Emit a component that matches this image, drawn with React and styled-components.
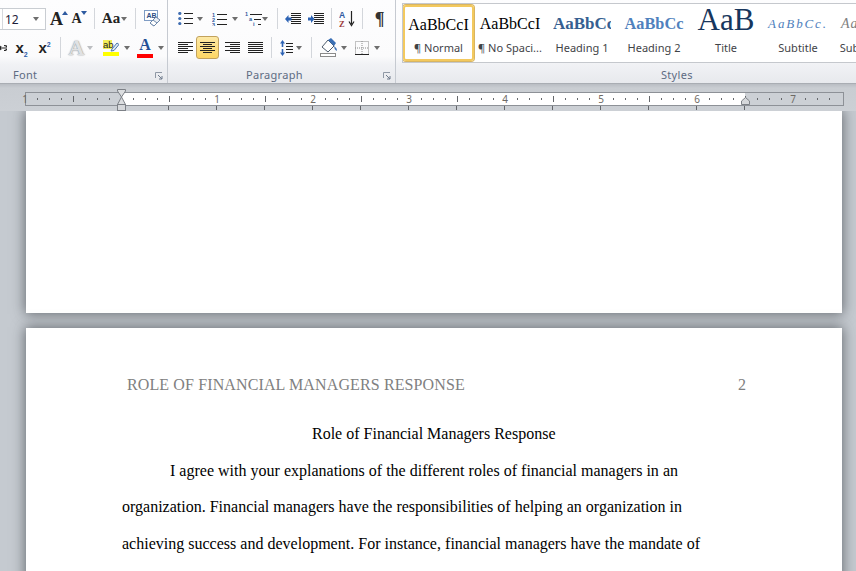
import React from "react";
import styled, { createGlobalStyle } from "styled-components";

const Global = createGlobalStyle`
  html, body { margin: 0; padding: 0; height: 100%; overflow: hidden; background: #c5cad0; }
  #root { height: 100%; }
  * { box-sizing: border-box; }
`;

const Shell = styled.div`
  width: 856px; height: 571px; overflow: hidden;
  display: flex; flex-direction: column;
  font-family: "Noto Sans", sans-serif;
`;

/* ---------- Ribbon ---------- */
const Ribbon = styled.div`
  height: 84px; flex: none; display: flex; position: relative; z-index: 2;
  background: linear-gradient(#fdfdfe 0, #fbfbfc 56px, #f1f2f5 64px, #e7e9ed 83px);
  border-bottom: 1px solid #a9adb3;
`;
const Group = styled.section`
  width: ${p => p.$w}px; flex: none; display: flex; flex-direction: column; position: relative;
  border-right: 1px solid #c6cad1; padding-top: 4px;
  ${p => p.$fill && "flex: 1; border-right: none;"}
`;
const ToolRow = styled.div`
  height: 29px; display: flex; align-items: center; flex: none;
`;
const GroupLabel = styled.div`
  position: absolute; top: 67px; left: ${p => p.$x}px;
  font-size: 11px; line-height: 15px; color: #5d6b82; letter-spacing: .3px;
`;
const Launcher = styled.svg`
  position: absolute; top: 72px; left: ${p => p.$x}px; width: 8px; height: 8px;
`;
const Tool = styled.div`
  width: ${p => p.$w}px; margin-left: ${p => p.$ml || 0}px; flex: none;
  display: flex; align-items: center; justify-content: center; position: relative;
  ${p => p.$active && `
    height: 23px; border: 1px solid #c2a25c; border-radius: 3px;
    background: linear-gradient(#fde9a6, #fdd664);
  `}
`;
const Sep = styled.div`
  width: 1px; height: 21px; flex: none; margin-left: ${p => p.$ml}px; background: #d3d6db;
`;
const Caret = styled.div`
  flex: none; margin-left: ${p => p.$ml || 0}px; width: 0; height: 0;
  border-left: 3.5px solid transparent; border-right: 3.5px solid transparent;
  border-top: 4px solid ${p => p.$dim ? "#bcbec1" : "#6e6e6e"};
`;
const Combo = styled.div`
  width: 46px; height: 22px; flex: none; margin-top: 1px;
  display: flex; align-items: center; justify-content: space-between;
  border: 1px solid #c9cdd2; border-left: none; background: #fff;
  padding: 0 6px 0 5px; position: relative;
  font: 12px "Noto Sans", sans-serif; color: #1d1d3a;
  &::before { content: ""; position: absolute; left: 2px; top: 0; bottom: 0; width: 1px; background: #d6d9dd; }
`;
const SerifGlyph = styled.span`
  font: bold ${p => p.$s}px/1 "Liberation Serif", serif; color: ${p => p.$c || "#222"};
  ${p => p.$shadow && "text-shadow: 0 0 1px #8f9296, 0 0 2px #a9abae;"}
`;
const Script = styled.span`
  font: bold 15px/1 "Liberation Sans", sans-serif; color: #222;
  sub, sup { font-size: 7px; color: #2a5aa8; line-height: 0; }
`;
const GrowCaret = styled.svg`
  width: 6px; height: 4px; flex: none; margin: 0 0 12px -1px;
`;
const ColorStack = styled.div`
  display: flex; flex-direction: column; align-items: center; gap: 1px;
`;
const ColorBar = styled.i`
  display: block; width: 16px; height: 4px; background: #f00;
`;

/* ---------- Styles gallery ---------- */
const Gallery = styled.div`
  position: absolute; left: 6px; top: 3px; right: -2px; height: 60px;
  background: #fff; border: 1px solid #c5c8cd; border-right: none;
  display: flex; padding: 1px 0 0 0; overflow: hidden;
`;
const StyleTile = styled.div`
  width: 72px; height: 56px; flex: none; display: flex; flex-direction: column; align-items: center;
  border-radius: 3px; overflow: hidden; position: relative;
  ${p => p.$active && `
    border: 2px solid #f3c95e; box-shadow: inset 0 0 0 1px #fff, 0 0 0 1px #d9b561;
    width: 71px;
  `}
`;
const Sample = styled.div`
  height: ${p => p.$active ? 33 : 35}px; width: ${p => p.$clip || 66}px;
  padding: 3px 0 ${p => (p.$up || 0) * 2}px ${p => p.$pl || 0}px;
  display: flex; align-items: center; overflow: hidden;
  justify-content: ${p => p.$left ? "flex-start" : "center"}; white-space: nowrap; flex: none;
  font-family: "Liberation Serif", serif; font-size: ${p => p.$s}px; color: ${p => p.$c || "#000"};
  font-weight: ${p => p.$b ? 700 : 400}; font-style: ${p => p.$i ? "italic" : "normal"};
  letter-spacing: ${p => p.$ls || 0}px;
`;
const TileLabel = styled.div`
  font-size: 11px; line-height: 15px; color: #3f4347; white-space: nowrap;
`;

/* ---------- Ruler ---------- */
const RulerBand = styled.div`
  height: 27px; flex: none; position: relative; z-index: 2; padding: 8px 12px 0 25px;
  background: linear-gradient(#b9bdc3 0, #c9cdd2 4px, #ccd0d5 100%);
`;
const RulerBar = styled.div`
  height: 14px; border: 1px solid #8d9197; display: flex; position: relative;
  background: linear-gradient(to right, #ccd0d5 95px, #fff 95px, #fff 719px, #ccd0d5 719px);
`;
const RulerScale = styled.div`
  display: flex; margin-left: -7px; height: 100%;
`;
const Cell = styled.div`
  width: 12px; flex: none; display: flex; align-items: center; justify-content: center; position: relative;
`;
const Tick = styled.i`
  display: block; width: 1px; height: ${p => p.$long ? 6 : 2}px; background: #64676b;
`;
const RulerNum = styled.span`
  font-size: 10px; line-height: 12px; color: #6e6a64; font-family: "Noto Sans", sans-serif;
`;
const UnderTick = styled.i`
  position: absolute; top: 13px; left: 5px; width: 1px; height: 4px; background: #64676b;
`;
const Marker = styled.svg`
  position: absolute; left: ${p => p.$x}px; top: ${p => p.$y}px;
`;

/* ---------- Document ---------- */
const DocArea = styled.div`
  flex: 1; min-height: 0; overflow: hidden; display: flex; flex-direction: column; gap: 15px;
  padding: 0 14px 0 26px;
  background: #c5cad0;
`;
const Page = styled.div`
  width: 816px; flex: none; background: #fff; height: ${p => p.$h}px;
  box-shadow: 0 0 12px 1px rgba(40,45,50,.6);
  font: 16px/36.5px "Liberation Serif", serif; color: #000;
`;
const HeaderRow = styled.div`
  display: flex; justify-content: space-between; padding: 48px 96px 0 101px;
  font-size: 16px; line-height: 18px; color: #808080; margin-bottom: 22px;
`;
const HeaderTitle = styled.span`
  letter-spacing: .12px;
`;
const Line = styled.div`
  margin-left: ${p => p.$x}px; width: ${p => p.$w}px; white-space: nowrap;
  text-align: justify; text-align-last: justify;
`;

/* ---------- Icons ---------- */
const S = ({ w, h, children }) => <svg width={w} height={h} viewBox={`0 0 ${w} ${h}`}>{children}</svg>;
const Bars = ({ x, ys, w, c = "#222", h = 1 }) => ys.map(y => <rect key={y} x={x} y={y} width={w} height={h} fill={c} />);

const Grow = ({ up, size }) => (
  <>
    <SerifGlyph $s={size}>A</SerifGlyph>
    <GrowCaret viewBox="0 0 6 4">
      <path d={up ? "M0 4 L3 0 L6 4Z" : "M0 0 L6 0 L3 4Z"} fill="#2d5aa0" />
    </GrowCaret>
  </>
);
const Eraser = () => (
  <S w={17} h={17}>
    <rect x="0.5" y="0.5" width="13" height="10" fill="#fff" stroke="#7f9cc4" />
    <text x="2.5" y="8" fontSize="7" fontFamily="Liberation Sans" fontWeight="700" fill="#2d4f86">AB</text>
    <path d="M6 13 L12 7 L16 10 L10 16 Z" fill="#e9eef4" stroke="#6f89ab" />
    <path d="M6 13 L9 10 L13 13 L10 16 Z" fill="#fff" stroke="#6f89ab" />
  </S>
);
const Strike = () => (
  <S w={7} h={8}>
    <path d="M0 4 L7 4 M1 2 L0 4 L1 6 M4 1.5 Q7 1.5 6.5 3 M4 6.5 Q6.5 6.5 6.5 5" stroke="#222" fill="none" strokeWidth="1.2" />
  </S>
);
const Highlight = () => (
  <S w={16} h={16}>
    <rect x="0" y="0" width="9" height="9" fill="#f2ee58" />
    <text x="0" y="8" fontSize="9.5" fontFamily="Liberation Sans" fill="#222">ab</text>
    <path d="M9 9 L14 3 L16 4.5 L11 10.5 L8 11 Z" fill="#dbe6f3" stroke="#4d78ad" />
    <rect x="0" y="12" width="16" height="4" fill="#ffff00" />
  </S>
);
const FontColor = () => (
  <ColorStack>
    <SerifGlyph $s={16} $c="#244f96">A</SerifGlyph>
    <ColorBar />
  </ColorStack>
);
const Bullets = () => (
  <S w={15} h={13}>
    {[1.5, 6.5, 11.5].map(y => <circle key={y} cx="1.8" cy={y} r="1.6" fill="#3f6db1" />)}
    <Bars x={6} ys={[1, 6, 11]} w={9} />
  </S>
);
const Numbered = () => (
  <S w={15} h={14}>
    {["1", "2", "3"].map((t, i) => <text key={t} x="0" y={4.5 + i * 5} fontSize="5.5" fontWeight="700" fontFamily="Liberation Sans" fill="#2d5aa0">{t}</text>)}
    <Bars x={5} ys={[2, 7, 12]} w={10} />
  </S>
);
const Multi = () => (
  <S w={17} h={15}>
    <text x="0" y="5" fontSize="5.5" fontWeight="700" fontFamily="Liberation Sans" fill="#2d5aa0">1</text>
    <text x="4" y="10" fontSize="5.5" fontWeight="700" fontFamily="Liberation Sans" fill="#2d5aa0">a</text>
    <text x="8" y="15" fontSize="5.5" fontWeight="700" fontFamily="Liberation Sans" fill="#2d5aa0">i</text>
    <Bars x={5} ys={[3]} w={12} />
    <Bars x={9} ys={[8]} w={7} />
    <Bars x={13} ys={[13]} w={3} />
  </S>
);
const Indent = ({ flip }) => (
  <S w={16} h={12}>
    <Bars x={6} ys={[0, 2, 4, 6, 8, 10]} w={10} />
    <path d={flip ? "M0 4.5 H3 V2 L6.5 6 L3 10 V7.5 H0Z" : "M6.5 4.5 H3.5 V2 L0 6 L3.5 10 V7.5 H6.5Z"} fill="#2d63b4" />
  </S>
);
const Sort = () => (
  <S w={16} h={17}>
    <text x="0" y="7.5" fontSize="8.5" fontWeight="700" fontFamily="Liberation Sans" fill="#2d5aa0">A</text>
    <text x="0" y="16.5" fontSize="8.5" fontWeight="700" fontFamily="Liberation Serif" fill="#9b3b3b">Z</text>
    <path d="M12.5 1 V14 M10 11.5 L12.5 15.5 L15 11.5" stroke="#222" fill="none" strokeWidth="1.2" />
  </S>
);
const Align = ({ kind }) => {
  const widths = kind === "center" ? [15, 9] : kind === "just" ? [15, 15] : [15, 10];
  return (
    <S w={15} h={11}>
      {[0, 1, 2, 3, 4, 5].map(i => {
        const w = widths[i % 2];
        const x = kind === "left" ? 0 : kind === "right" ? 15 - w : Math.round((15 - w) / 2);
        return <rect key={i} x={x} y={i * 2} width={w} height="1" fill="#222" />;
      })}
    </S>
  );
};
const Spacing = () => (
  <S w={13} h={16}>
    <path d="M2.5 0 L5 3.5 H3.3 V7 H1.7 V3.5 H0Z M2.5 16 L5 12.5 H3.3 V9 H1.7 V12.5 H0Z" fill="#2d63b4" />
    <Bars x={6} ys={[3, 6, 9, 12]} w={7} />
  </S>
);
const Fill = () => (
  <S w={18} h={19}>
    <path d="M2 9 L8 2 L14 8 L8 14 Z" fill="#fff" stroke="#4d5b6b" />
    <path d="M8 2 L11 0 L16 5 L14 8 Z" fill="#3a6fb5" />
    <path d="M14 8 Q18 11 16.5 13 Q14 11 14 8Z" fill="#3a6fb5" />
    <rect x="0.5" y="15.5" width="15" height="3" fill="#fff" stroke="#8b8b8b" />
  </S>
);
const Borders = () => (
  <S w={14} h={14}>
    <rect x="0.5" y="0.5" width="13" height="13" fill="none" stroke="#8a8a8a" strokeDasharray="1 1" />
    <path d="M7 0 V14 M0 7 H14" stroke="#8a8a8a" strokeDasharray="1 1" />
    <rect x="0" y="13" width="14" height="1" fill="#222" />
  </S>
);
const LauncherIcon = ({ x }) => (
  <Launcher $x={x} viewBox="0 0 8 8">
    <path d="M0.5 6 V0.5 H7" fill="none" stroke="#8f98a5" />
    <path d="M3 3 L7 7 M7 4 V7 H4" fill="none" stroke="#6f7b8c" />
  </Launcher>
);

const tiles = [
  { name: "¶ Normal", s: 16, active: true, text: "AaBbCcI" },
  { name: "¶ No Spaci...", s: 16, text: "AaBbCcI" },
  { name: "Heading 1", s: 17, b: true, c: "#365f91", left: true, clip: 58, text: "AaBbCc" },
  { name: "Heading 2", s: 16.3, b: true, c: "#4f81bd", text: "AaBbCc" },
  { name: "Title", s: 31, c: "#17365d", up: 4, text: "AaB" },
  { name: "Subtitle", s: 13, i: true, c: "#4f81bd", ls: 1.9, text: "AaBbCc." },
  { name: "Subtle Em...", s: 14, i: true, c: "#808080", left: true, pl: 4, ls: 1, text: "AaBbCcDd" },
];

const cells = [];
for (let n = -8; n <= 59; n++) cells.push(n);

const RulerCell = ({ n }) => {
  const inside = n >= 0 && n <= 52;
  const num = n % 8 === 0 ? Math.abs(n / 8) : null;
  return (
    <Cell>
      {num ? <RulerNum>{num}</RulerNum> : n === 0 ? null : <Tick $long={n % 4 === 0} />}
      {inside && n % 4 === 0 && n > 0 && <UnderTick />}
    </Cell>
  );
};

export default function App() {
  return (
    <Shell>
      <Global />
      <Ribbon>
        <Group $w={168}>
          <ToolRow>
            <Combo>12<Caret /></Combo>
            <Tool $w={18} $ml={4}><Grow up size={18} /></Tool>
            <Tool $w={14} $ml={4}><Grow size={14} /></Tool>
            <Sep $ml={8} />
            <Tool $w={16} $ml={8}><SerifGlyph $s={15}>Aa</SerifGlyph></Tool>
            <Caret $ml={2} />
            <Sep $ml={8} />
            <Tool $w={17} $ml={8}><Eraser /></Tool>
          </ToolRow>
          <ToolRow>
            <Tool $w={7}><Strike /></Tool>
            <Tool $w={13} $ml={8}><Script>x<sub>2</sub></Script></Tool>
            <Tool $w={13} $ml={10}><Script>x<sup>2</sup></Script></Tool>
            <Sep $ml={9} />
            <Tool $w={15} $ml={8}><SerifGlyph $s={22} $c="#dfe1e3" $shadow>A</SerifGlyph></Tool>
            <Caret $ml={3} $dim />
            <Tool $w={16} $ml={10}><Highlight /></Tool>
            <Caret $ml={5} />
            <Tool $w={16} $ml={7}><FontColor /></Tool>
            <Caret $ml={5} />
          </ToolRow>
          <GroupLabel $x={13}>Font</GroupLabel>
          <LauncherIcon x={155} />
        </Group>
        <Group $w={228}>
          <ToolRow>
            <Tool $w={15} $ml={10}><Bullets /></Tool>
            <Caret $ml={4} />
            <Tool $w={15} $ml={9}><Numbered /></Tool>
            <Caret $ml={5} />
            <Tool $w={17} $ml={7}><Multi /></Tool>
            <Caret $ml={0} />
            <Sep $ml={9} />
            <Tool $w={16} $ml={7}><Indent /></Tool>
            <Tool $w={16} $ml={7}><Indent flip /></Tool>
            <Sep $ml={7} />
            <Tool $w={16} $ml={7}><Sort /></Tool>
            <Sep $ml={7} />
            <Tool $w={11} $ml={11}><SerifGlyph $s={18} $c="#333">¶</SerifGlyph></Tool>
          </ToolRow>
          <ToolRow>
            <Tool $w={15} $ml={10}><Align kind="left" /></Tool>
            <Tool $w={23} $ml={3} $active><Align kind="center" /></Tool>
            <Tool $w={15} $ml={6}><Align kind="right" /></Tool>
            <Tool $w={15} $ml={8}><Align kind="just" /></Tool>
            <Sep $ml={8} />
            <Tool $w={13} $ml={8}><Spacing /></Tool>
            <Caret $ml={3} />
            <Sep $ml={9} />
            <Tool $w={18} $ml={8}><Fill /></Tool>
            <Caret $ml={3} />
            <Tool $w={14} $ml={8}><Borders /></Tool>
            <Caret $ml={5} />
          </ToolRow>
          <GroupLabel $x={78}>Paragraph</GroupLabel>
          <LauncherIcon x={215} />
        </Group>
        <Group $fill>
          <Gallery>
            {tiles.map(t => (
              <StyleTile key={t.name} $active={t.active}>
                <Sample $active={t.active} $s={t.s} $b={t.b} $i={t.i} $c={t.c} $ls={t.ls} $left={t.left} $clip={t.clip} $up={t.up} $pl={t.pl}>
                  {t.text}
                </Sample>
                <TileLabel>{t.name}</TileLabel>
              </StyleTile>
            ))}
          </Gallery>
          <GroupLabel $x={265}>Styles</GroupLabel>
        </Group>
      </Ribbon>
      <RulerBand>
        <RulerBar>
          <RulerScale>
            {cells.map(n => <RulerCell key={n} n={n} />)}
          </RulerScale>
          <Marker $x={91} $y={-4} width="10" height="22" viewBox="0 0 10 22">
            <path d="M0.5 0.5 H8.5 V2 L4.5 8 L8.5 15.5 H0.5 L4.5 8 L0.5 2 Z" fill="#dcdee0" stroke="#7d8187" />
            <rect x="0.5" y="15.5" width="8" height="6" fill="#d6d8db" stroke="#7d8187" />
          </Marker>
          <Marker $x={715} $y={4} width="10" height="8" viewBox="0 0 10 8">
            <path d="M4.5 0.5 L8.5 4 V7.5 H0.5 V4 Z" fill="#d6d8db" stroke="#7d8187" />
          </Marker>
        </RulerBar>
      </RulerBand>
      <DocArea>
        <Page $h={202} />
        <Page $h={300}>
          <HeaderRow>
            <HeaderTitle>ROLE OF FINANCIAL MANAGERS RESPONSE</HeaderTitle>
            <span>2</span>
          </HeaderRow>
          <Line $x={286} $w={243}>Role of Financial Managers Response</Line>
          <Line $x={144} $w={508}>I agree with your explanations of the different roles of financial managers in an</Line>
          <Line $x={96} $w={560}>organization. Financial managers have the responsibilities of helping an organization in</Line>
          <Line $x={96} $w={578}>achieving success and development. For instance, financial managers have the mandate of</Line>
        </Page>
      </DocArea>
    </Shell>
  );
}
